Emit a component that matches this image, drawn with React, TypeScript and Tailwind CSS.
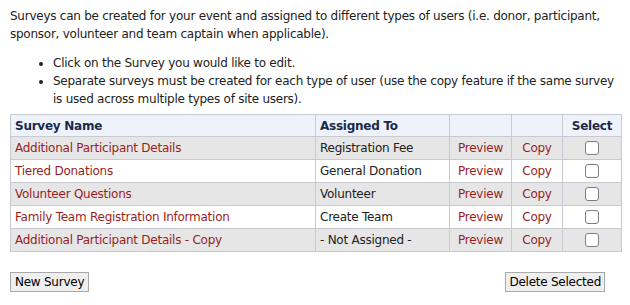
const rows = [
  { name: 'Additional Participant Details', assigned: 'Registration Fee' },
  { name: 'Tiered Donations', assigned: 'General Donation' },
  { name: 'Volunteer Questions', assigned: 'Volunteer' },
  { name: 'Family Team Registration Information', assigned: 'Create Team' },
  { name: 'Additional Participant Details - Copy', assigned: '- Not Assigned -' },
];

export default function App() {
  return (
    <div
      className="w-[630px] h-[305px] bg-white text-[12px] leading-[18px] tracking-[-0.25px] text-[#222] px-[10px] pt-[7px]"
      style={{ fontFamily: 'Verdana, "DejaVu Sans", sans-serif' }}
    >
      <p className="whitespace-nowrap">
        Surveys can be created for your event and assigned to different types of users (i.e. donor, participant,
        <br />
        sponsor, volunteer and team captain when applicable).
      </p>
      <ul className="list-disc pl-[43px] mt-[11px] whitespace-nowrap">
        <li>Click on the Survey you would like to edit.</li>
        <li>
          Separate surveys must be created for each type of user (use the copy feature if the same survey
          <br />
          is used across multiple types of site users).
        </li>
      </ul>

      <table className="mt-[6px] w-[612px] border-collapse border border-[#c9c9d1]">
        <thead>
          <tr className="bg-[#eef3fb] text-[#1c2a4a] font-bold h-[22px]">
            <th className="w-[305px] text-left px-[4px] border border-[#c9c9d1]">Survey Name</th>
            <th className="w-[134px] text-left px-[4px] border border-[#c9c9d1]">Assigned To</th>
            <th className="w-[62px] border border-[#c9c9d1]"></th>
            <th className="w-[51px] border border-[#c9c9d1]"></th>
            <th className="text-center border border-[#c9c9d1]">Select</th>
          </tr>
        </thead>
        <tbody>
          {rows.map((r, i) => (
            <tr key={r.name} className={`h-[23px] ${i % 2 === 0 ? 'bg-[#e6e6e6]' : 'bg-white'}`}>
              <td className="px-[4px] text-[#9a1e1e] border border-[#c9c9d1]">{r.name}</td>
              <td className="px-[4px] border border-[#c9c9d1]">{r.assigned}</td>
              <td className="text-center text-[#9a1e1e] border border-[#c9c9d1]">Preview</td>
              <td className="text-center text-[#9a1e1e] border border-[#c9c9d1]">Copy</td>
              <td className="border border-[#c9c9d1]">
                <div className="flex justify-center">
                  <span className="block w-[14px] h-[14px] rounded-[3px] border border-[#7c7c84] bg-white" />
                </div>
              </td>
            </tr>
          ))}
        </tbody>
      </table>

      <div className="flex justify-between mt-[20px] w-[595px]">
        <button className="h-[20px] px-[4px] bg-[#efefef] border border-[#a9a9a9] text-[12px] leading-[18px] text-black">
          New Survey
        </button>
        <button className="h-[20px] px-[3px] bg-[#efefef] border border-[#a9a9a9] text-[12px] leading-[18px] text-black">
          Delete Selected
        </button>
      </div>
    </div>
  );
}
